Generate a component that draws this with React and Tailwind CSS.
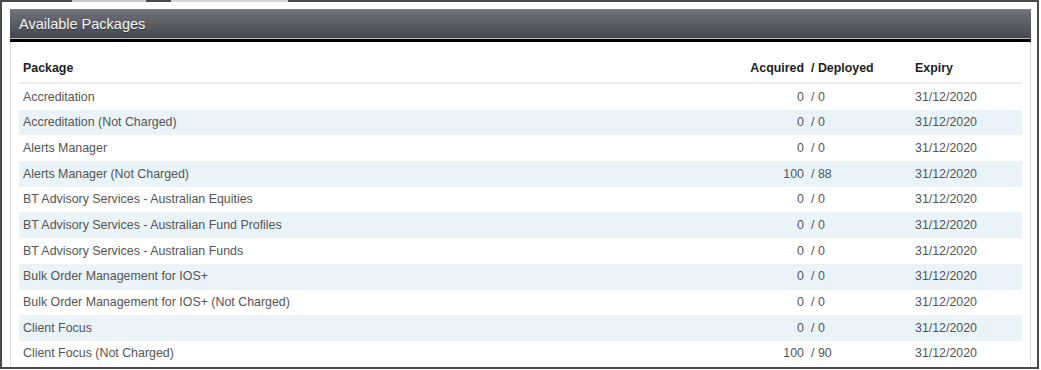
const packages = [
  { name: 'Accreditation', acquired: 0, deployed: 0, expiry: '31/12/2020' },
  { name: 'Accreditation (Not Charged)', acquired: 0, deployed: 0, expiry: '31/12/2020' },
  { name: 'Alerts Manager', acquired: 0, deployed: 0, expiry: '31/12/2020' },
  { name: 'Alerts Manager (Not Charged)', acquired: 100, deployed: 88, expiry: '31/12/2020' },
  { name: 'BT Advisory Services - Australian Equities', acquired: 0, deployed: 0, expiry: '31/12/2020' },
  { name: 'BT Advisory Services - Australian Fund Profiles', acquired: 0, deployed: 0, expiry: '31/12/2020' },
  { name: 'BT Advisory Services - Australian Funds', acquired: 0, deployed: 0, expiry: '31/12/2020' },
  { name: 'Bulk Order Management for IOS+', acquired: 0, deployed: 0, expiry: '31/12/2020' },
  { name: 'Bulk Order Management for IOS+ (Not Charged)', acquired: 0, deployed: 0, expiry: '31/12/2020' },
  { name: 'Client Focus', acquired: 0, deployed: 0, expiry: '31/12/2020' },
  { name: 'Client Focus (Not Charged)', acquired: 100, deployed: 90, expiry: '31/12/2020' },
];

export default function App() {
  return (
    <div className="w-[1039px] h-[369px] bg-white overflow-hidden flex flex-col border-l-2 border-r-2 border-b-2 border-[#4a4a4a] font-['Liberation_Sans',Arial,sans-serif]">
      {/* top edge, with the tabs of the page above peeking through */}
      <div className="flex h-[2px] shrink-0">
        <div className="w-[70px] bg-[#4a4a4a]" />
        <div className="w-[74px] bg-[#c9c9c9]" />
        <div className="w-[25px] bg-[#4a4a4a]" />
        <div className="w-[117px] bg-[#d6d6d6]" />
        <div className="flex-1 bg-[#4a4a4a]" />
      </div>

      <div className="flex-1 flex flex-col pt-[7px] pl-[8px] pr-[6px] min-h-0">
        {/* panel header */}
        <div className="h-[29px] shrink-0 flex items-center pl-[9px] pt-px bg-gradient-to-b from-[#6f7278] to-[#44484e] border-t border-[#7d8086]">
          <span className="text-[14.5px] text-[#f4f4f4] [text-shadow:0_1px_0_rgba(0,0,0,0.35)]">Available Packages</span>
        </div>
        <div className="h-px shrink-0 bg-[#b9b9b9]" />
        <div className="h-[3px] shrink-0 bg-black" />

        {/* panel body */}
        <div className="flex-1 min-h-0 bg-white border-l border-r border-[#dcdcdc] pt-[12px] pl-[8px] pr-[8px]">
          <div className="flex h-[28px] items-center text-[12.4px] font-bold text-[#1e1e1e] border-b-2 border-[#eeeeee] box-content">
            <div className="flex-1 pl-1">Package</div>
            <div className="w-[68px] pr-1 text-right">Acquired</div>
            <div className="w-[103px] pl-[3px]">/ Deployed</div>
            <div className="w-[111px] pl-1">Expiry</div>
          </div>
          {packages.map((p, i) => (
            <div
              key={p.name}
              className={`flex h-[25.7px] items-center text-[12.4px] text-[#555555] ${i % 2 === 1 ? 'bg-[#e9f3f8]' : 'bg-white'}`}
            >
              <div className="flex-1 pl-1">{p.name}</div>
              <div className="w-[68px] pr-1 text-right">{p.acquired}</div>
              <div className="w-[103px] pl-[3px]">/ {p.deployed}</div>
              <div className="w-[111px] pl-1">{p.expiry}</div>
            </div>
          ))}
        </div>
      </div>
    </div>
  );
}
